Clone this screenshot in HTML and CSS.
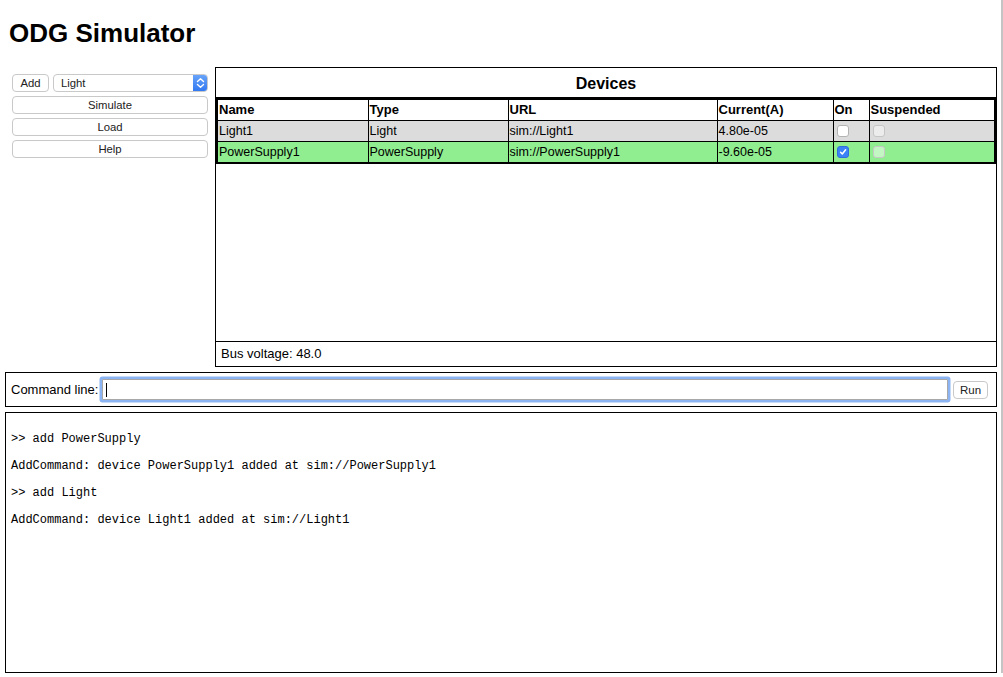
FILE: index.html
```html
<!DOCTYPE html>
<html lang="en">
<head>
<meta charset="utf-8">
<title>ODG Simulator</title>
<link rel="stylesheet" href="styles.css">
</head>
<body>
<div class="page">
  <h1 class="title">ODG Simulator</h1>
  <div class="top">
    <div class="sidebar">
      <div class="addrow">
        <button class="btn add">Add</button>
        <div class="select">
          <span class="select-text">Light</span>
          <span class="select-arrow">
            <svg width="9" height="12" viewBox="0 0 9 12"><path d="M1.5 4.5 L4.5 1.8 L7.5 4.5 M1.5 7.5 L4.5 10.2 L7.5 7.5" fill="none" stroke="#fff" stroke-width="1.4" stroke-linecap="round" stroke-linejoin="round"/></svg>
          </span>
        </div>
      </div>
      <button class="btn wide">Simulate</button>
      <button class="btn wide">Load</button>
      <button class="btn wide">Help</button>
    </div>
    <div class="devices">
      <div class="dev-head">Devices</div>
      <table class="dev-table">
        <colgroup>
          <col class="c-name"><col class="c-type"><col class="c-url"><col class="c-cur"><col class="c-on"><col>
        </colgroup>
        <thead>
          <tr><th>Name</th><th>Type</th><th>URL</th><th>Current(A)</th><th>On</th><th>Suspended</th></tr>
        </thead>
        <tbody>
          <tr class="off">
            <td>Light1</td><td>Light</td><td>sim://Light1</td><td>4.80e-05</td>
            <td><span class="cb"></span></td><td><span class="cb dis"></span></td>
          </tr>
          <tr class="on">
            <td>PowerSupply1</td><td>PowerSupply</td><td>sim://PowerSupply1</td><td>-9.60e-05</td>
            <td><span class="cb chk"><svg width="10" height="10" viewBox="0 0 10 10"><path d="M2.6 5.2 L4.3 7 L7.6 2.8" fill="none" stroke="#fff" stroke-width="1.5" stroke-linecap="round" stroke-linejoin="round"/></svg></span></td>
            <td><span class="cb dis"></span></td>
          </tr>
        </tbody>
      </table>
      <div class="dev-fill"></div>
      <div class="bus">Bus voltage: 48.0</div>
    </div>
  </div>
  <div class="cmd">
    <label class="cmd-label" for="cmd">Command line:</label>
    <input id="cmd" class="cmd-input" type="text">
    <button class="btn run">Run</button>
  </div>
  <div class="out">
    <p>&gt;&gt; add PowerSupply</p>
    <p>AddCommand: device PowerSupply1 added at sim://PowerSupply1</p>
    <p>&gt;&gt; add Light</p>
    <p>AddCommand: device Light1 added at sim://Light1</p>
  </div>
</div>
</body>
</html>
```
FILE: styles.css
```css
html {
  border-right: 2px solid #c4c4c4;
  background: #fff;
}
body {
  margin: 0;
  font-family: "Liberation Sans", Arial, sans-serif;
  color: #000;
}
.page {
  padding: 0 4px 0 5px;
}
.title {
  font-size: 26px;
  line-height: 30px;
  font-weight: 700;
  margin: 18px 0 19px 4px;
}
.top {
  display: flex;
  height: 300px;
}
.sidebar {
  width: 196px;
  padding: 7px 7px 0 7px;
  flex: none;
}
.addrow {
  display: flex;
  gap: 4px;
  height: 18px;
}
.btn {
  font-family: "Liberation Sans", Arial, sans-serif;
  font-size: 11.3px;
  color: #222;
  background: #fff;
  border: 1px solid #c9c9c9;
  border-radius: 4px;
  height: 18px;
  padding: 0;
  box-sizing: border-box;
  line-height: 16px;
}
.add {
  width: 37px;
}
.wide {
  display: block;
  width: 100%;
  margin-top: 4px;
}
.select {
  flex: 1;
  display: flex;
  align-items: center;
  border: 1px solid #c9c9c9;
  border-radius: 4px;
  box-sizing: border-box;
  height: 18px;
  font-size: 11.3px;
  color: #222;
  overflow: hidden;
}
.select-text {
  flex: 1;
  padding-left: 7px;
}
.select-arrow {
  width: 15px;
  height: 18px;
  margin: -1px -1px -1px 0;
  background: linear-gradient(#6ba6fa, #2f76f1);
  border-radius: 0 4px 4px 0;
  display: flex;
  align-items: center;
  justify-content: center;
}
.devices {
  flex: 1;
  border: 1px solid #000;
  display: flex;
  flex-direction: column;
  min-width: 0;
}
.dev-head {
  height: 30px;
  box-sizing: border-box;
  padding-top: 7px;
  line-height: 18px;
  font-size: 16px;
  font-weight: 700;
  text-align: center;
  border-bottom: 1px solid #000;
}
.dev-table {
  width: 100%;
  table-layout: fixed;
  border-collapse: collapse;
  border: 2px solid #000;
  font-size: 12.5px;
}
.c-name { width: 151px; }
.c-type { width: 140px; }
.c-url { width: 209px; }
.c-cur { width: 116px; }
.c-on { width: 36px; }
.dev-table th,
.dev-table td {
  border: 1px solid #000;
  padding: 0 1px;
  line-height: 20px;
  height: 20px;
  text-align: left;
  white-space: nowrap;
  overflow: hidden;
}
.dev-table th {
  font-weight: 700;
  font-size: 13px;
}
.off td {
  background: #dcdcdc;
}
.on td {
  background: #90ee90;
}
.cb {
  display: inline-block;
  box-sizing: border-box;
  width: 12px;
  height: 12px;
  margin-left: 2px;
  border: 1px solid #b3b3b3;
  border-radius: 3px;
  background: #fff;
  vertical-align: -2px;
}
.cb.dis {
  background: rgba(255, 255, 255, 0.45);
  border-color: #c6c6c6;
}
.cb.chk {
  background: #3b82f7;
  border-color: #2f6fdd;
}
.cb.chk svg {
  display: block;
}
.dev-fill {
  flex: 1;
}
.bus {
  border-top: 1px solid #000;
  height: 25px;
  box-sizing: border-box;
  padding-left: 5px;
  line-height: 24px;
  font-size: 13px;
}
.cmd {
  margin-top: 5px;
  border: 1px solid #000;
  height: 35px;
  box-sizing: border-box;
  display: flex;
  align-items: center;
  padding: 0 8px 0 5px;
  gap: 4px;
}
.cmd-label {
  font-size: 13px;
}
.cmd-input {
  flex: 1;
  height: 21px;
  box-sizing: border-box;
  border: 1px solid #a8a8a8;
  border-radius: 1px;
  outline: none;
  box-shadow: 0 0 0 2.5px #8cb4f2;
  padding: 0 3px;
  font-size: 13px;
  font-family: "Liberation Sans", Arial, sans-serif;
  background: #fff linear-gradient(#000, #000) no-repeat 3px 50% / 1px 14px;
}
.run {
  width: 35px;
  margin-left: 1px;
  font-size: 11.5px;
}
.out {
  margin-top: 5px;
  border: 1px solid #000;
  height: 261px;
  box-sizing: border-box;
  padding: 7px 5px 6px;
}
.out p {
  font-family: "Liberation Mono", "Courier New", monospace;
  font-size: 12px;
  line-height: 15px;
  margin: 12px 0;
}
```
